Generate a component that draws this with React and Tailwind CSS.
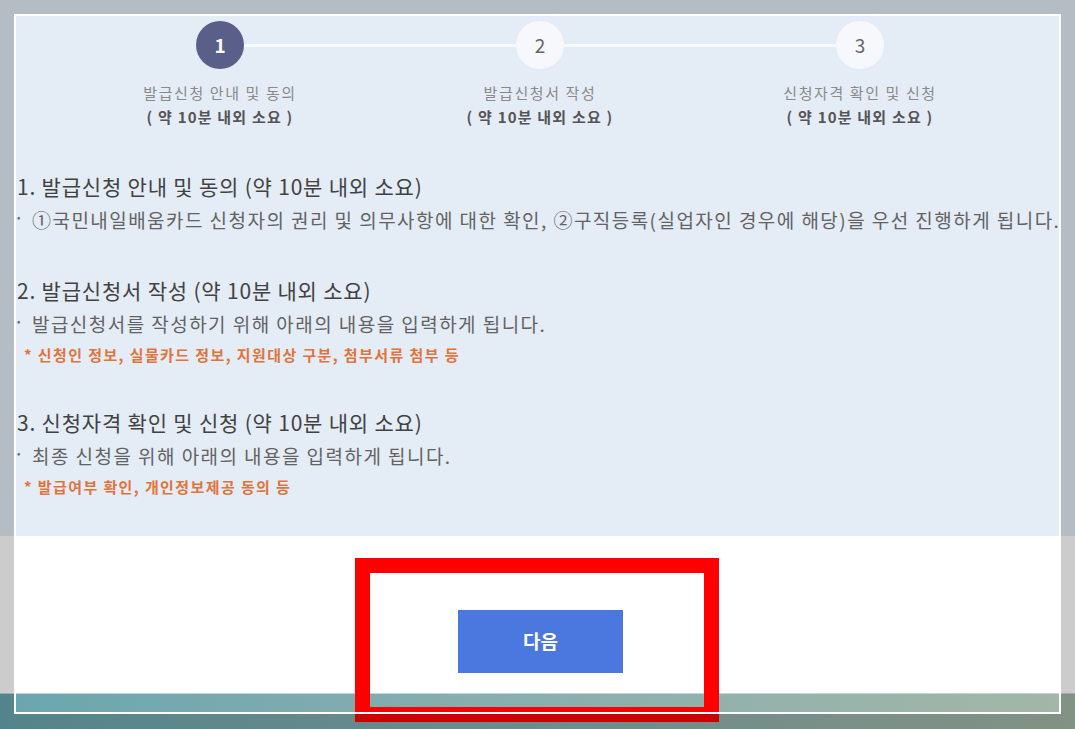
const steps = [
    { no: 1, title: '발급신청 안내 및 동의', active: true },
    { no: 2, title: '발급신청서 작성' },
    { no: 3, title: '신청자격 확인 및 신청' },
];

const sections = [
    {
        title: '1. 발급신청 안내 및 동의 (약 10분 내외 소요)',
        desc: '①국민내일배움카드 신청자의 권리 및 의무사항에 대한 확인, ②구직등록(실업자인 경우에 해당)을 우선 진행하게 됩니다.',
    },
    {
        title: '2. 발급신청서 작성 (약 10분 내외 소요)',
        desc: '발급신청서를 작성하기 위해 아래의 내용을 입력하게 됩니다.',
        note: '* 신청인 정보, 실물카드 정보, 지원대상 구분, 첨부서류 첨부 등',
    },
    {
        title: '3. 신청자격 확인 및 신청 (약 10분 내외 소요)',
        desc: '최종 신청을 위해 아래의 내용을 입력하게 됩니다.',
        note: '* 발급여부 확인, 개인정보제공 동의 등',
    },
];

const Stepper = () => (
    <div className="grid grid-cols-3 w-[960px] ml-[43px] pt-[21px]">
        {steps.map((step, i) => (
            <div key={step.no} className="flex flex-col items-center">
                <div className="flex items-center w-full">
                    <div className={`flex-1 h-[3px] ${i === 0 ? 'bg-transparent' : 'bg-[#f7f9fc]'}`} />
                    <div
                        className={`w-[48px] h-[48px] rounded-full flex items-center justify-center text-[19px] ${
                            step.active ? 'bg-[#595f88] text-white font-bold' : 'bg-[#f6f8fc] text-[#666]'
                        }`}
                    >
                        {step.no}
                    </div>
                    <div className={`flex-1 h-[3px] ${i === steps.length - 1 ? 'bg-transparent' : 'bg-[#f7f9fc]'}`} />
                </div>
                <div className="mt-[12px] text-[15px] leading-[24px] tracking-[1.6px] text-[#8a8a8a]">{step.title}</div>
                <div className="text-[15px] leading-[24px] tracking-[1.2px] font-bold text-[#555]">( 약 10분 내외 소요 )</div>
            </div>
        ))}
    </div>
);

const App = () => {
    return (
        <div
            className="relative w-[1075px] h-[729px] overflow-hidden"
            style={{ fontFamily: '"Noto Sans CJK KR", "Noto Sans", sans-serif' }}
        >
            <div className="h-[536px] bg-[#e4ecf6] pl-[17px]">
                <Stepper />

                <div className="mt-[42px] flex flex-col">
                    {sections.map((s, i) => (
                        <div key={i} className={i === 0 ? '' : i === 1 ? 'mt-[41px]' : 'mt-[40px]'}>
                            <h2 className="text-[21px] leading-[30px] text-[#424242] tracking-[0.8px]">{s.title}</h2>
                            <p className="mt-[5px] flex items-start text-[19px] leading-[28px] tracking-[1.45px] text-[#636363] whitespace-nowrap">
                                <span className="w-[15px] text-[10px] text-[#666] leading-[22px] tracking-normal">•</span>
                                <span>{s.desc}</span>
                            </p>
                            {s.note && (
                                <p className="mt-[5px] ml-[7px] text-[15px] leading-[24px] tracking-[1.4px] font-bold text-[#e2733a]">
                                    {s.note}
                                </p>
                            )}
                        </div>
                    ))}
                </div>
            </div>

            <div className="h-[157px] bg-white flex justify-center pl-[6px] pt-[74px]">
                <button className="w-[165px] h-[63px] bg-[#4a78df] text-white text-[19px] font-bold">다음</button>
            </div>

            <div className="h-[36px] border-t border-[#c3d6d6] bg-[linear-gradient(90deg,#6aa6ae_0%,#88aeb0_45%,#a3b7a6_100%)]" />

            {/* highlight box */}
            <div className="absolute left-[355px] top-[558px] w-[364px] h-[164px] border-[15px] border-[#ff0000] pointer-events-none" />

            {/* capture frame, dims what lies outside */}
            <div className="absolute left-[14px] top-[14px] w-[1047px] h-[700px] border-2 border-white shadow-[0_0_0_2000px_rgba(0,0,0,0.2)] pointer-events-none" />
        </div>
    );
};

export default App;
